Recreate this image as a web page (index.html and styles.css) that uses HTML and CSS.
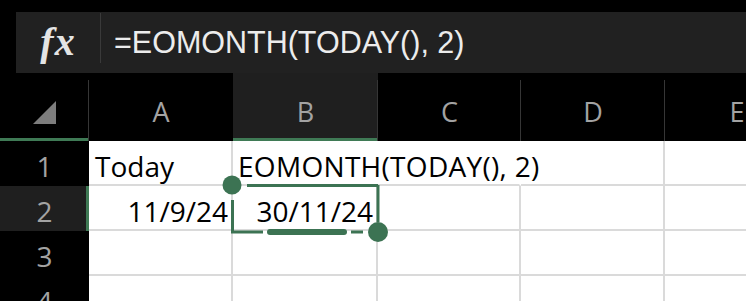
FILE: index.html
```html
<!DOCTYPE html>
<html>
<head>
<meta charset="utf-8">
<link rel="stylesheet" href="styles.css">
</head>
<body>
<div class="formula-bar">
  <div class="fx">fx</div>
  <div class="formula">=EOMONTH(TODAY(), 2)</div>
</div>
<div class="sheet">
  <div class="corner"><svg width="23" height="23" viewBox="0 0 23 23"><polygon points="23,0 23,23 0,23" fill="#7d7d7d"/></svg></div>
  <div class="ch">A</div>
  <div class="ch sel">B</div>
  <div class="ch">C</div>
  <div class="ch">D</div>
  <div class="ch">E</div>

  <div class="rh">1</div>
  <div class="c">Today</div>
  <div class="c over">EOMONTH(TODAY(), 2)</div>
  <div class="c hide"></div>
  <div class="c"></div>
  <div class="c"></div>

  <div class="rh sel">2</div>
  <div class="c num">11/9/24</div>
  <div class="c num">30/11/24</div>
  <div class="c"></div>
  <div class="c"></div>
  <div class="c"></div>

  <div class="rh">3</div>
  <div class="c"></div>
  <div class="c"></div>
  <div class="c"></div>
  <div class="c"></div>
  <div class="c"></div>

  <div class="rh">4</div>
  <div class="c"></div>
  <div class="c"></div>
  <div class="c"></div>
  <div class="c"></div>
  <div class="c"></div>
</div>
<svg class="selection" width="746" height="301" viewBox="0 0 746 301">
  <g stroke="#3c7353" stroke-width="3" fill="none">
    <path d="M247 185.5 H378"/>
    <path d="M378 185 V222"/>
    <path d="M232.5 200 V232"/>
    <path d="M231 232 H263"/>
    <path d="M351 232 H363"/>
  </g>
  <path d="M270 232 H344" stroke="#3c7353" stroke-width="6" stroke-linecap="round"/>
  <circle cx="232" cy="185" r="9.5" fill="#3c7353"/>
  <circle cx="378" cy="232" r="10" fill="#3c7353"/>
</svg>
</body>
</html>
```

FILE: styles.css
```css
* { box-sizing: border-box; }

body {
  margin: 0;
  background: #000;
  width: 746px;
  height: 301px;
  overflow: hidden;
  position: relative;
  font-family: "Open Sans", "Liberation Sans", sans-serif;
}

.formula-bar {
  margin: 12px 0 0 16px;
  height: 61px;
  background: #212121;
  display: flex;
  align-items: flex-start;
}

.fx {
  width: 85px;
  height: 50px;
  margin-top: 1px;
  border-right: 1px solid #3a3a3a;
  display: flex;
  align-items: center;
  justify-content: center;
  padding-top: 6px;
  font-family: "Liberation Serif", "Times New Roman", serif;
  font-style: italic;
  font-weight: bold;
  font-size: 40px;
  letter-spacing: 1px;
  color: #e4e4e4;
}

.formula {
  align-self: center;
  padding-left: 13px;
  font-family: "Liberation Sans", Arial, sans-serif;
  font-size: 30.5px;
  color: #ececec;
  white-space: nowrap;
}

.sheet {
  display: grid;
  grid-template-columns: 89px 144px 145px 143px 144px 144px;
  grid-template-rows: 68px 45px 45px 45px 45px;
}

.corner {
  background: #000;
  border-bottom: 3px solid #3f7a55;
  padding: 28px 0 0 33px;
}
.corner svg { display: block; }

.ch {
  position: relative;
  background: #000;
  color: #a3a3a3;
  font-size: 27px;
  display: flex;
  justify-content: center;
  align-items: center;
  padding-top: 12px;
  border-bottom: 3px solid #000;
}
.ch::before {
  content: "";
  position: absolute;
  left: -1px;
  top: 7px;
  bottom: -3px;
  width: 1px;
  background: #363636;
}
.ch.sel {
  background: #1f1f1f;
  border-bottom-color: #3f7a55;
}
.ch.sel::before { display: none; }

.rh {
  background: #000;
  color: #a3a3a3;
  font-size: 28px;
  line-height: 1;
  display: flex;
  justify-content: center;
  align-items: flex-end;
  padding-bottom: 6px;
}
.rh.sel {
  background: #1f1f1f;
  border-right: 3px solid #3f7a55;
  padding-left: 3px;
}

.c {
  background: #fff;
  border-right: 2px solid #dadada;
  border-bottom: 2px solid #dadada;
  font-size: 28px;
  line-height: 1;
  color: #000;
  white-space: nowrap;
  display: flex;
  align-items: flex-end;
  padding: 0 3px 4px 6px;
}
.c.num { justify-content: flex-end; }
.c.over {
  position: relative;
  z-index: 1;
  border-right-color: #fff;
  padding-left: 5px;
  letter-spacing: 0.3px;
}
.c.hide { border-right-color: #fff; }

.selection {
  position: absolute;
  left: 0;
  top: 0;
  z-index: 5;
  pointer-events: none;
}
```
